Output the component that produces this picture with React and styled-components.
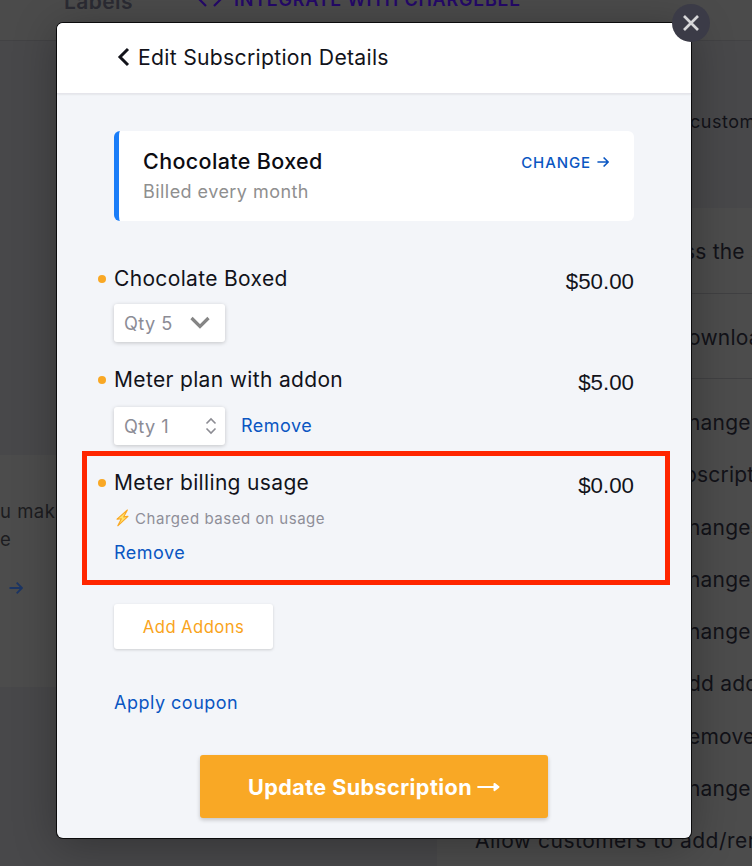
import React from "react";
import styled, { createGlobalStyle } from "styled-components";

const permissions = ["ss the store", "ownload"];

const subscriptionLines = ["hange", "bscript", "hanges", "hange", "hange", "dd add", "emove", "hange"];

const App = () => {
  return (
    <>
      <GlobalStyle />
      <Page>
        <TopBar>
          <TopLabel>Labels</TopLabel>
          <TopLink>
            <svg width="24" height="18" viewBox="0 0 24 18" fill="none" stroke="currentColor" strokeWidth="2.2">
              <path d="M8 3 L2 9 L8 15 M16 3 L22 9 L16 15" />
            </svg>
            INTEGRATE WITH CHARGEBEE
          </TopLink>
        </TopBar>
        <Content>
          <LeftColumn>
            <InfoCard>
              <InfoText>u mak</InfoText>
              <InfoText>e</InfoText>
              <InfoArrow>
                <Arrow size={14} stroke={1.8} />
              </InfoArrow>
            </InfoCard>
          </LeftColumn>
          <RightColumn>
            <Intro>custom</Intro>
            <Panel>
              {permissions.map((text) => (
                <PanelRow key={text}>{text}</PanelRow>
              ))}
              <PanelList>
                {subscriptionLines.map((text, i) => (
                  <PanelLine key={i} $left={text === "bscript" ? 209 : 213}>
                    {text}
                  </PanelLine>
                ))}
                <LastLine>Allow customers to add/remove</LastLine>
              </PanelList>
            </Panel>
          </RightColumn>
        </Content>
      </Page>

      <Modal>
        <CloseButton aria-label="Close">
          <svg width="18" height="18" viewBox="0 0 18 18" fill="none" stroke="#d6d6d8" strokeWidth="2.7">
            <path d="M2 2 L16 16 M16 2 L2 16" />
          </svg>
        </CloseButton>
        <Header>
          <svg width="13" height="20" viewBox="0 0 13 20" fill="none" stroke="#12131a" strokeWidth="3">
            <path d="M11 2 L3 10 L11 18" />
          </svg>
          <Title>Edit Subscription Details</Title>
        </Header>
        <Body>
          <PlanCard>
            <div>
              <PlanName>Chocolate Boxed</PlanName>
              <PlanPeriod>Billed every month</PlanPeriod>
            </div>
            <ChangeLink>
              CHANGE
              <Arrow size={12} stroke={1.9} />
            </ChangeLink>
          </PlanCard>

          <Item $top={43}>
            <ItemHead>
              <Bullet />
              <ItemName>Chocolate Boxed</ItemName>
              <Price>$50.00</Price>
            </ItemHead>
            <QtyRow $top={10}>
              <QtyBox $right={15}>
                Qty 5
                <svg width="20" height="14" viewBox="0 0 20 14" fill="none" stroke="#858585" strokeWidth="3.2">
                  <path d="M1.5 2 L10 10.5 L18.5 2" />
                </svg>
              </QtyBox>
            </QtyRow>
          </Item>

          <Item $top={23}>
            <ItemHead>
              <Bullet />
              <ItemName>Meter plan with addon</ItemName>
              <Price>$5.00</Price>
            </ItemHead>
            <QtyRow $top={12}>
              <QtyBox $right={8}>
                Qty 1
                <svg width="12" height="18" viewBox="0 0 12 18" fill="none" stroke="#8c8c93" strokeWidth="1.6">
                  <path d="M1.5 6.5 L6 2 L10.5 6.5 M1.5 11.5 L6 16 L10.5 11.5" />
                </svg>
              </QtyBox>
              <Link>Remove</Link>
            </QtyRow>
          </Item>

          <Highlight>
            <ItemHead>
              <Bullet />
              <ItemName>Meter billing usage</ItemName>
              <Price>$0.00</Price>
            </ItemHead>
            <UsageNote>
              <svg width="15" height="18" viewBox="0 0 15 18">
                <path
                  d="M12.4 1 L2 10.2 L6.4 9.7 L2.8 16.8 L13 7.4 L8.6 7.9 Z"
                  fill="#ffe36b"
                  stroke="#f9a825"
                  strokeWidth="1.1"
                  strokeLinejoin="round"
                />
              </svg>
              Charged based on usage
            </UsageNote>
            <Link>Remove</Link>
          </Highlight>

          <AddButton>Add Addons</AddButton>
          <Coupon>Apply coupon</Coupon>
          <UpdateButton>
            Update Subscription
            <svg width="23" height="12" viewBox="0 0 23 12">
              <path d="M1.2 6 H18" stroke="#fff" strokeWidth="2.2" strokeLinecap="round" />
              <path d="M17.4 2.8 L21.6 6 L17.4 9.2 Z" fill="#fff" stroke="#fff" strokeWidth="1.8" strokeLinejoin="round" />
            </svg>
          </UpdateButton>
        </Body>
      </Modal>
    </>
  );
};

const Arrow = ({ size, stroke }) => (
  <svg width={size} height={size} viewBox="0 0 14 14" fill="none" stroke="currentColor" strokeWidth={stroke}>
    <path d="M0.5 7 H13 M7.7 1.7 L13 7 L7.7 12.3" />
  </svg>
);

export default App;

const GlobalStyle = createGlobalStyle`
  * {
    box-sizing: border-box;
  }

  body {
    margin: 0;
    overflow: hidden;
    font-family: Inter, "Liberation Sans", sans-serif;
    color: #12131a;
  }

  svg {
    display: block;
    flex-shrink: 0;
  }

  button {
    border: 0;
    padding: 0;
    font-family: inherit;
  }
`;

const Page = styled.div`
  width: 752px;
  height: 866px;
  overflow: hidden;
  display: flex;
  flex-direction: column;
  background: #48484a;
`;

const TopBar = styled.div`
  height: 41px;
  flex-shrink: 0;
  display: flex;
  align-items: flex-start;
  background: #4b4b4b;
  border-bottom: 1px solid #424244;
  white-space: nowrap;
`;

const TopLabel = styled.div`
  margin: -11px 0 0 64px;
  width: 134px;
  font-size: 21px;
  line-height: 26px;
  font-weight: 600;
  letter-spacing: 0.4px;
  color: #2b2b33;
`;

const TopLink = styled.div`
  margin-top: -12px;
  display: flex;
  align-items: center;
  gap: 12px;
  font-size: 18px;
  line-height: 24px;
  font-weight: 600;
  letter-spacing: 0.78px;
  color: #240868;
`;

const Content = styled.div`
  flex: 1;
  display: flex;
`;

const LeftColumn = styled.div`
  width: 437px;
  flex-shrink: 0;
  padding-top: 414px;
`;

const InfoCard = styled.div`
  width: 380px;
  height: 232px;
  padding-top: 42px;
  background: #4c4c4c;
`;

const InfoText = styled.div`
  font-size: 18.5px;
  line-height: 28px;
  letter-spacing: 0.5px;
  color: #1c1c20;
`;

const InfoArrow = styled.div`
  margin: 28px 0 0 9px;
  color: #1c3564;
`;

const RightColumn = styled.div`
  width: 400px;
  flex-shrink: 0;
  font-size: 21px;
  letter-spacing: 0.2px;
  white-space: nowrap;
  color: #121218;
`;

const Intro = styled.div`
  height: 167px;
  padding: 67px 0 0 253px;
  font-size: 18px;
  line-height: 28px;
  letter-spacing: 0.5px;
`;

const Panel = styled.div`
  height: 660px;
  background: #4c4c4c;
`;

const PanelRow = styled.div`
  height: 85.5px;
  display: flex;
  align-items: center;
  padding: 3px 0 0 251px;
  border-bottom: 1px solid #404042;

  &:first-child {
    padding-left: 247px;
  }
`;

const PanelList = styled.div`
  padding: 18px 0 0 38px;
`;

const PanelLine = styled.div`
  height: 52.3px;
  padding-left: ${({ $left }) => $left}px;
  line-height: 52px;
`;

const LastLine = styled.div`
  line-height: 52px;
  letter-spacing: 0.5px;
`;

const Modal = styled.div`
  position: absolute;
  left: 57px;
  top: 23px;
  width: 634px;
  height: 815px;
  border-radius: 6px;
  background: #f3f5f9;
  box-shadow: 0 0 0 1px #0b0b0c, 0 6px 44px rgba(0, 0, 0, 0.3);
`;

const CloseButton = styled.button`
  position: absolute;
  right: -19px;
  top: -19px;
  width: 38px;
  height: 38px;
  border-radius: 50%;
  display: flex;
  align-items: center;
  justify-content: center;
  background: #3b3b47;
`;

const Header = styled.div`
  height: 71px;
  display: flex;
  align-items: center;
  gap: 8px;
  padding: 0 0 3px 60px;
  border-radius: 6px 6px 0 0;
  background: #fff;
  border-bottom: 1px solid #e5e5eb;
  box-shadow: 0 1px 2px rgba(0, 0, 0, 0.06);
`;

const Title = styled.div`
  font-size: 21.2px;
  letter-spacing: 0.28px;
`;

const Body = styled.div`
  padding: 37px 57px 0;
  display: flex;
  flex-direction: column;
  align-items: stretch;
`;

const PlanCard = styled.div`
  height: 90px;
  display: flex;
  justify-content: space-between;
  padding: 16px 25px 0 24px;
  border-left: 5px solid #1a7df8;
  border-radius: 6px;
  background: #fff;
`;

const PlanName = styled.div`
  font-size: 21.5px;
  line-height: 28px;
  font-weight: 500;
  letter-spacing: 0.36px;
  color: #0c0c12;
`;

const PlanPeriod = styled.div`
  margin-top: 5px;
  font-size: 18px;
  line-height: 24px;
  letter-spacing: 0.45px;
  color: #8f8f8f;
`;

const ChangeLink = styled.div`
  height: 30px;
  display: flex;
  align-items: center;
  gap: 6px;
  font-size: 15px;
  font-weight: 500;
  letter-spacing: 0.9px;
  color: #0a56c2;
`;

const Item = styled.div`
  margin-top: ${({ $top }) => $top}px;
`;

const ItemHead = styled.div`
  height: 30px;
  margin-left: -16px;
  display: flex;
  align-items: center;
`;

const Bullet = styled.span`
  width: 8px;
  height: 8px;
  margin-right: 8px;
  border-radius: 50%;
  background: #f9a825;
`;

const ItemName = styled.span`
  flex: 1;
  padding-bottom: 1px;
  font-size: 21px;
  letter-spacing: 0.34px;
`;

const Price = styled.span`
  padding-top: 5px;
  font-family: "Liberation Sans", Arial, sans-serif;
  font-size: 22.3px;
`;

const QtyRow = styled.div`
  margin-top: ${({ $top }) => $top}px;
  display: flex;
  align-items: center;
  gap: 16px;
`;

const QtyBox = styled.div`
  width: 111px;
  height: 38px;
  display: flex;
  align-items: center;
  justify-content: space-between;
  padding: 0 ${({ $right }) => $right}px 1px 10px;
  border-radius: 3px;
  background: #fff;
  box-shadow: 0 1px 4px rgba(0, 0, 0, 0.2);
  font-size: 18.2px;
  letter-spacing: 0.4px;
  color: #8c8c96;
`;

const Link = styled.div`
  font-size: 18px;
  line-height: 24px;
  letter-spacing: 0.5px;
  color: #0a56c2;
`;

const Highlight = styled.div`
  height: 134px;
  margin: 6px -36px 0 -32px;
  padding: 12px 31px 0 27px;
  border: 5px solid #ff2600;
`;

const UsageNote = styled.div`
  height: 24px;
  margin: 8px 0 11px;
  display: flex;
  align-items: center;
  gap: 5px;
  padding-left: 1px;
  font-size: 15px;
  letter-spacing: 0.55px;
  color: #8e8e98;
`;

const AddButton = styled.button`
  width: 159px;
  height: 45px;
  margin-top: 19px;
  border-radius: 3px;
  background: #fff;
  box-shadow: 0 1px 3px rgba(0, 0, 0, 0.16);
  font-size: 16.7px;
  letter-spacing: 0.4px;
  color: #f9a41b;
`;

const Coupon = styled(Link)`
  margin-top: 42px;
`;

const UpdateButton = styled.button`
  width: 348px;
  height: 63px;
  margin: 40px 0 0 86px;
  display: flex;
  align-items: center;
  justify-content: center;
  gap: 5px;
  border-radius: 3px;
  background: #f9a825;
  box-shadow: 0 2px 4px rgba(0, 0, 0, 0.2);
  font-size: 21.6px;
  font-weight: 700;
  letter-spacing: 0.42px;
  color: #fff;
`;
